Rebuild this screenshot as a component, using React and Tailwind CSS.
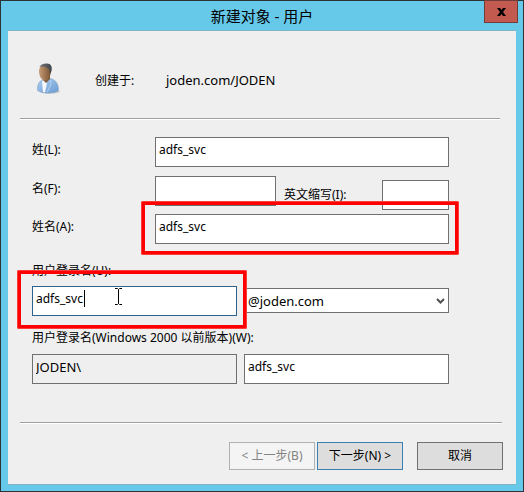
import React from "react";
import clsx from "clsx";

function TextField({ className, ...props }) {
  return (
    <input
      type="text"
      spellCheck={false}
      className={clsx(
        "block h-[30px] w-full min-w-0 rounded-none border pt-0 pr-1 pb-[5px] pl-[3px] outline-none",
        className ?? "border-[#707070] bg-white text-[12px]"
      )}
      {...props}
    />
  );
}

function Divider({ className }) {
  return <div className={clsx("h-0.5 border-t border-[#a0a0a0] bg-white", className)} />;
}

function Highlight({ className }) {
  return (
    <div
      className={clsx(
        "pointer-events-none absolute z-10 rounded-xs border-4 border-[#fe0000] outline -outline-offset-1 outline-[#ff3b3b]",
        className
      )}
    />
  );
}

function UserIcon() {
  return (
    <svg width="24" height="32" viewBox="0 0 24 32" aria-hidden="true">
      <defs>
        <linearGradient id="skin" x1="0" x2="1">
          <stop offset="0" stopColor="#c79c78" />
          <stop offset="1" stopColor="#76502f" />
        </linearGradient>
        <linearGradient id="shirt" x1="0" y1="0" x2="1" y2="1">
          <stop offset="0" stopColor="#a9cdf0" />
          <stop offset="1" stopColor="#6d9dd2" />
        </linearGradient>
        <linearGradient id="hair" x1="0" x2="1">
          <stop offset="0" stopColor="#77797a" />
          <stop offset="1" stopColor="#3f4346" />
        </linearGradient>
      </defs>
      <ellipse cx="13" cy="28.500" rx="10" ry="2" fill="#cccccc" />
      <path d="M.5 27.500C0 22 2 18 6 16.500L13 15.500C19 16.500 21.500 21 21.500 27.500C18 31 5 31 .5 27.500Z" fill="url(#shirt)" stroke="#7f9fc2" strokeWidth=".5" />
      <path d="M5 19L6 17L10 20L8 29.500L6 29Z" fill="#f5f7fa" />
      <path d="M6 13H13V16L9 20L6 17Z" fill="#805b3b" />
      <path d="M2 8C2 4 5 2 9 2C13 2 14.500 5 14 9C13 14 11 17.500 8 17.500C4 17 2 13 2 8Z" fill="url(#skin)" />
      <path d="M2.500 4C4 1 7 .5 10 .5C14 .5 15.500 4 14.500 8L13 11L12 6Q7 2.500 2.500 4Z" fill="url(#hair)" />
      <path d="M13 17Q16 20 10 29" fill="none" stroke="#c0daf3" strokeWidth=".8" />
    </svg>
  );
}

const buttonBase = "h-7 w-[86px] border text-center text-[12px] leading-4";

export default function App() {
  return (
    <main className="flex min-h-screen w-full flex-col border border-[#2d3438] bg-[#66c9ea] px-[7px] pb-1.5 font-['Noto_Sans','Noto_Sans_CJK_SC',sans-serif] text-[12px] text-black">
      <header className="relative flex h-[29px] items-center justify-center">
        <h1 className="text-[15px] leading-5">新建对象 - 用户</h1>
        <button
          type="button"
          aria-label="关闭"
          className="absolute -top-px -right-0.5 flex h-[23px] w-[34px] items-center justify-center border border-[#713c3a] bg-[#c35a50]"
        >
          <svg width="9" height="8" viewBox="0 0 9 8" aria-hidden="true">
            <path d="M0 0H3L4.5 2L6 0H9L6 4L9 8H6L4.5 6L3 8H0L3 4Z" fill="#000" />
          </svg>
        </button>
      </header>

      <form
        className="flex-1 border-y border-[#7fb3c8] bg-[#efefef]"
        onSubmit={(e) => e.preventDefault()}
      >
        <div className="flex h-[87px] items-center pt-3 pl-[29px]">
          <div className="w-[58px] pb-1">
            <UserIcon />
          </div>
          <span className="w-[71px]">创建于:</span>
          <span className="text-[13px]">joden.com/JODEN</span>
        </div>
        <Divider className="mr-4 ml-3" />

        <div className="mt-[17px] pr-[67px] pl-6">
          <div className="grid grid-cols-[123px_1fr]">
            <label htmlFor="last" className="leading-[26px]">姓(L):</label>
            <TextField id="last" defaultValue="adfs_svc" />
          </div>

          <div className="mt-[9px] grid grid-cols-[123px_1fr_106px_67px]">
            <label htmlFor="first" className="leading-[26px]">名(F):</label>
            <TextField id="first" />
            <label htmlFor="initials" className="mt-1.5 ml-2 leading-[26px]">英文缩写(I):</label>
            <div className="pt-1">
              <TextField id="initials" />
            </div>
          </div>

          <div className="mt-1 grid grid-cols-[123px_1fr]">
            <label htmlFor="full" className="leading-[26px]">姓名(A):</label>
            <div className="relative">
              <TextField id="full" defaultValue="adfs_svc" />
              <Highlight className="-top-[13px] -right-2.5 -bottom-[11px] -left-3.5" />
            </div>
          </div>

          <label htmlFor="logon" className="mt-[18px] block leading-[18px]">用户登录名(U):</label>
          <div className="mt-1.5 grid grid-cols-2 items-start gap-[7px]">
            <div className="relative">
              <TextField id="logon" defaultValue="adfs_svc" className="border-[#2c628b] bg-white text-[12px]" />
              <span className="absolute top-1 left-[52px] h-[17px] w-px bg-black" />
              <svg className="absolute top-0.5 left-[82px]" width="9" height="17" viewBox="0 0 9 17" aria-hidden="true">
                <path d="M1 .5H3.5L4.5 1.5L5.5 .5H8M4.5 1.5V15.5M1 16.5H3.5L4.5 15.5L5.5 16.5H8" fill="none" stroke="#000" />
              </svg>
              <Highlight className="-top-4 -right-2.5 -bottom-[13px] -left-[15px]" />
            </div>
            <div className="relative mt-0.5">
              <select
                aria-label="域后缀"
                className="block h-[25px] w-full appearance-none border border-[#707070] bg-white pl-[3px] text-[13px] leading-5"
              >
                <option>@joden.com</option>
              </select>
              <svg className="pointer-events-none absolute top-2.5 right-1" width="9" height="7" viewBox="0 0 9 7" aria-hidden="true">
                <path d="M1 1L4.5 4.5L8 1" fill="none" stroke="#505050" strokeWidth="2" />
              </svg>
            </div>
          </div>

          <label htmlFor="legacy" className="mt-[13px] block leading-[18px]">
            用户登录名(Windows 2000 以前版本)(W):
          </label>
          <div className="mt-[7px] grid grid-cols-2 gap-[7px]">
            <TextField aria-label="域" defaultValue="JODEN\" readOnly className="border-[#707070] bg-[#efefef] text-[13px]" />
            <TextField id="legacy" defaultValue="adfs_svc" />
          </div>
        </div>

        <Divider className="mt-[38px] mr-3.5 ml-3" />
        <div className="mt-[18px] mb-3.5 flex justify-end pr-[13px]">
          <button type="button" disabled className={clsx(buttonBase, "mr-0.5 border-[#adb2b5] bg-[#f4f4f4] text-[#838383]")}>
            &lt; 上一步(B)
          </button>
          <button type="submit" className={clsx(buttonBase, "mr-3.5 border-[#3c7fb1] bg-[#dddddd]")}>
            下一步(N) &gt;
          </button>
          <button type="button" className={clsx(buttonBase, "border-[#707070] bg-[#dddddd]")}>
            取消
          </button>
        </div>
      </form>
    </main>
  );
}
